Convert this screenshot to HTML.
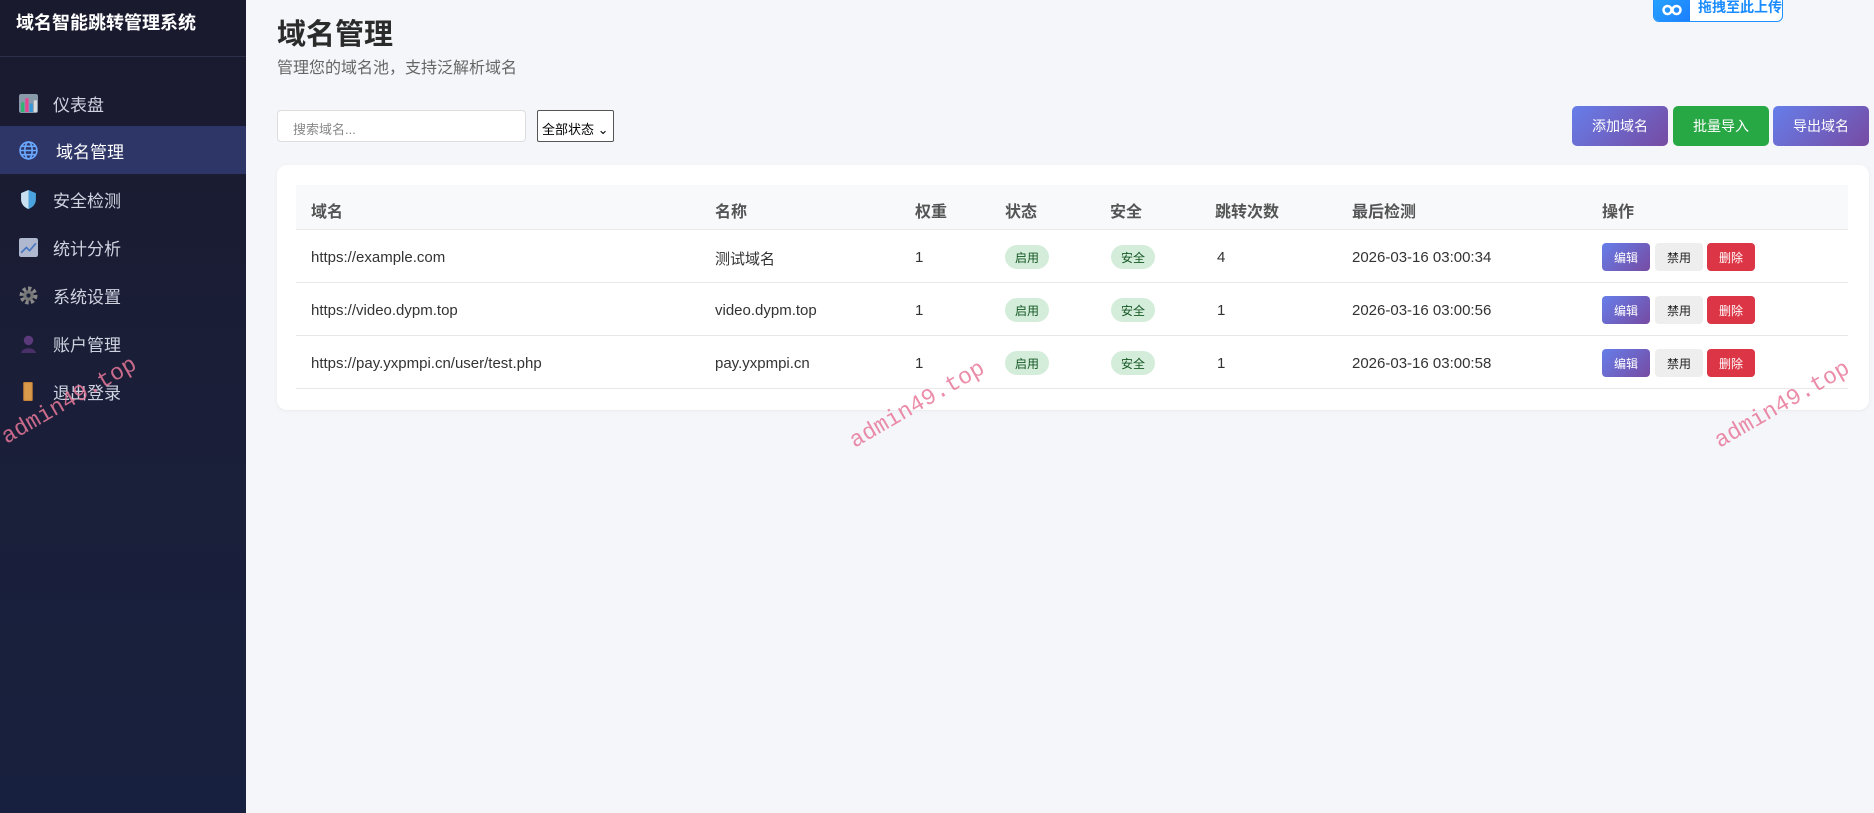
<!DOCTYPE html>
<html><head><meta charset="utf-8">
<style>
*{box-sizing:border-box;margin:0;padding:0}
body{width:1874px;height:813px;overflow:hidden;background:#f5f6fa;font-family:"Liberation Sans","Noto Sans CJK SC",sans-serif;position:relative;color:#333}
.side{position:absolute;left:0;top:0;width:246px;height:813px;background:linear-gradient(180deg,#1a1a2e 0%,#1a1f3a 60%,#17203e 100%)}
.brand{position:absolute;left:16px;top:9px;color:#fff;font-weight:bold;font-size:18px}
.div{position:absolute;left:0;top:56px;width:246px;height:1px;background:#2b2f4a}
.nav{position:absolute;left:0;width:246px;height:48px;display:flex;align-items:center;color:#cfd3e0;font-size:17px}
.nav .ic{position:absolute;left:19px;width:19px;height:19px}
.nav span{position:absolute;left:53px}
.nav.act{background:#2e3667;color:#fff}
.nav.act span{left:56px}
h1{position:absolute;left:277px;top:11px;font-size:29px;font-weight:bold;color:#2b2b2b}
.sub{position:absolute;left:277px;top:54px;font-size:16px;color:#666}
.search{position:absolute;left:277px;top:110px;width:249px;height:32px;border:1px solid #ddd;border-radius:4px;background:#fff;font-size:13px;color:#888;padding:8px 15px}
.sel{position:absolute;left:537px;top:110px;width:77px;height:32px;border:1px solid #555;border-radius:2px;background:#fff;font-size:13px;color:#000;padding:8px 4px}
.btn{position:absolute;top:106px;width:96px;height:40px;border-radius:5px;color:#fff;font-size:14px;display:flex;align-items:center;justify-content:center}
.pur{background:linear-gradient(135deg,#667eea,#764ba2)}
.card{position:absolute;left:277px;top:165px;width:1592px;height:245px;background:#fff;border-radius:10px;box-shadow:0 1px 4px rgba(0,0,0,.05)}
.th{position:absolute;left:296px;top:185px;width:1552px;height:45px;background:#f8f9fa;border-bottom:1px solid #e8e8e8}
.row{position:absolute;left:296px;width:1552px;height:53px;border-bottom:1px solid #e8e8e8}
.t{position:absolute;font-size:15px;color:#333;white-space:nowrap}
.h{font-weight:bold;color:#555;font-size:16px}
.bd{position:absolute;width:44px;height:24px;border-radius:12px;background:#d4edda;color:#155724;font-size:12px;display:flex;align-items:center;justify-content:center}
.ab{position:absolute;width:48px;height:28px;border-radius:4px;font-size:12px;display:flex;align-items:center;justify-content:center}
.wm{position:absolute;font-family:"Liberation Mono",monospace;font-size:23px;color:#e8789a;transform:rotate(-30deg);transform-origin:left bottom;white-space:nowrap;opacity:.85}
.up{position:absolute;left:1653px;top:-10px;width:130px;height:32px;border:1px solid #1e90ff;border-radius:6px;background:#fff;overflow:hidden}
.up i{position:absolute;left:0;top:0;width:36px;height:32px;background:linear-gradient(135deg,#29a8ff,#1a7dff)}
.up svg{position:absolute;left:8px;top:13px}
.up span{position:absolute;left:44px;top:6px;font-size:14px;font-weight:bold;color:#1a8cff}
</style></head><body>
<div class="side">
<div class="brand">域名智能跳转管理系统</div>
<div class="div"></div>
<div class="nav" style="top:79px"><svg class="ic" viewBox="0 0 18 18"><rect width="18" height="18" rx="2" fill="#8899aa"/><rect x="2" y="8" width="3" height="9" fill="#2bb673"/><rect x="6" y="4" width="3" height="13" fill="#e84393"/><rect x="10" y="9" width="3" height="8" fill="#3498db"/><rect x="14" y="6" width="3" height="11" fill="#ddd"/></svg><span>仪表盘</span></div>
<div class="nav act" style="top:126px"><svg class="ic" viewBox="0 0 18 18" fill="none" stroke="#6aa9ff" stroke-width="1.5"><circle cx="9" cy="9" r="8"/><ellipse cx="9" cy="9" rx="3.5" ry="8"/><path d="M1 9h16M2.5 5h13M2.5 13h13"/></svg><span>域名管理</span></div>
<div class="nav" style="top:175px"><svg class="ic" viewBox="0 0 18 18"><path d="M9 0L16 3v6c0 5-4 8-7 9-3-1-7-4-7-9V3z" fill="#4aa3df"/><path d="M9 0L2 3v6c0 5 4 8 7 9z" fill="#c8e0f0"/></svg><span>安全检测</span></div>
<div class="nav" style="top:223px"><svg class="ic" viewBox="0 0 18 18"><rect width="18" height="18" rx="2" fill="#b0b8d0"/><path d="M2 14l5-5 3 3 6-7" stroke="#4a78c0" stroke-width="1.6" fill="none"/></svg><span>统计分析</span></div>
<div class="nav" style="top:271px"><svg class="ic" viewBox="0 0 18 18"><circle cx="9" cy="9" r="6.5" fill="none" stroke="#888" stroke-width="4" stroke-dasharray="3 2"/><circle cx="9" cy="9" r="5" fill="#777"/><circle cx="9" cy="9" r="2" fill="#1a1f3a"/></svg><span>系统设置</span></div>
<div class="nav" style="top:319px"><svg class="ic" viewBox="0 0 18 18"><circle cx="9" cy="6" r="4.5" fill="#5a3a7a"/><path d="M2 18c1-6 13-6 14 0z" fill="#4a3068"/></svg><span>账户管理</span></div>
<div class="nav" style="top:367px"><svg class="ic" viewBox="0 0 18 18"><rect x="4" y="0" width="9" height="18" rx="1" fill="#c8823a"/><rect x="5" y="1" width="7" height="16" fill="#d99a4c"/></svg><span>退出登录</span></div>
</div>
<h1>域名管理</h1>
<div class="sub">管理您的域名池，支持泛解析域名</div>
<div class="search">搜索域名...</div>
<div class="sel">全部状态 ⌄</div>
<div class="btn pur" style="left:1572px">添加域名</div>
<div class="btn" style="left:1673px;background:#28a745">批量导入</div>
<div class="btn pur" style="left:1773px">导出域名</div>
<div class="up"><i></i><svg width="20" height="12" viewBox="0 0 20 12"><circle cx="5.5" cy="6" r="4" fill="none" stroke="#fff" stroke-width="2.5"/><circle cx="14.5" cy="6" r="4" fill="none" stroke="#fff" stroke-width="2.5"/></svg><span>拖拽至此上传</span></div>
<div class="card"></div>
<div class="th"></div>
<div class="t h" style="left:311px;top:198px">域名</div>
<div class="t h" style="left:715px;top:198px">名称</div>
<div class="t h" style="left:915px;top:198px">权重</div>
<div class="t h" style="left:1005px;top:198px">状态</div>
<div class="t h" style="left:1110px;top:198px">安全</div>
<div class="t h" style="left:1215px;top:198px">跳转次数</div>
<div class="t h" style="left:1352px;top:198px">最后检测</div>
<div class="t h" style="left:1602px;top:198px">操作</div>

<div class="row" style="top:230px"></div>
<div class="row" style="top:283px"></div>
<div class="row" style="top:336px"></div>

<div class="t" style="left:311px;top:249px">https://example.com</div>
<div class="t" style="left:715px;top:248px">测试域名</div>
<div class="t" style="left:915px;top:249px">1</div>
<div class="bd" style="left:1005px;top:245px">启用</div>
<div class="bd" style="left:1111px;top:245px">安全</div>
<div class="t" style="left:1217px;top:249px">4</div>
<div class="t" style="left:1352px;top:249px">2026-03-16 03:00:34</div>

<div class="t" style="left:311px;top:302px">https://video.dypm.top</div>
<div class="t" style="left:715px;top:302px">video.dypm.top</div>
<div class="t" style="left:915px;top:302px">1</div>
<div class="bd" style="left:1005px;top:298px">启用</div>
<div class="bd" style="left:1111px;top:298px">安全</div>
<div class="t" style="left:1217px;top:302px">1</div>
<div class="t" style="left:1352px;top:302px">2026-03-16 03:00:56</div>

<div class="t" style="left:311px;top:355px">https://pay.yxpmpi.cn/user/test.php</div>
<div class="t" style="left:715px;top:355px">pay.yxpmpi.cn</div>
<div class="t" style="left:915px;top:355px">1</div>
<div class="bd" style="left:1005px;top:351px">启用</div>
<div class="bd" style="left:1111px;top:351px">安全</div>
<div class="t" style="left:1217px;top:355px">1</div>
<div class="t" style="left:1352px;top:355px">2026-03-16 03:00:58</div>

<div class="ab pur" style="left:1602px;top:243px;color:#fff">编辑</div>
<div class="ab" style="left:1655px;top:243px;background:#eee;color:#222">禁用</div>
<div class="ab" style="left:1707px;top:243px;background:#dc3545;color:#fff">删除</div>
<div class="ab pur" style="left:1602px;top:296px;color:#fff">编辑</div>
<div class="ab" style="left:1655px;top:296px;background:#eee;color:#222">禁用</div>
<div class="ab" style="left:1707px;top:296px;background:#dc3545;color:#fff">删除</div>
<div class="ab pur" style="left:1602px;top:349px;color:#fff">编辑</div>
<div class="ab" style="left:1655px;top:349px;background:#eee;color:#222">禁用</div>
<div class="ab" style="left:1707px;top:349px;background:#dc3545;color:#fff">删除</div>

<div class="wm" style="left:10px;top:424px">admin49.top</div>
<div class="wm" style="left:858px;top:428px">admin49.top</div>
<div class="wm" style="left:1723px;top:428px">admin49.top</div>
</body></html>
